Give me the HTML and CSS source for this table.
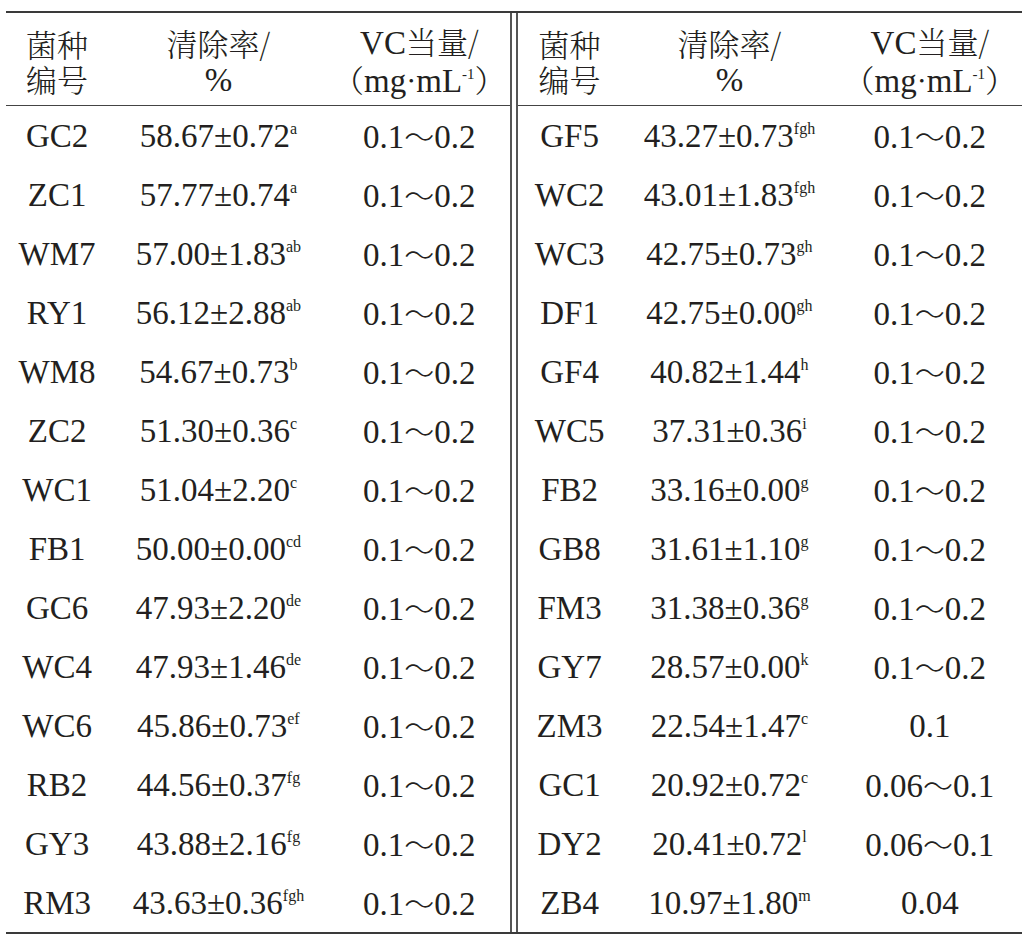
FILE: index.html
```html
<!DOCTYPE html>
<html lang="zh">
<head>
<meta charset="utf-8">
<title>菌种清除率</title>
<link rel="stylesheet" href="styles.css">
</head>
<body>
<div class="frame">
  <table class="half half-left">
    <colgroup><col class="c1"><col class="c2"><col class="c3"></colgroup>
    <thead>
      <tr><th>菌种<br>编号</th><th>清除率/<br><span class="lat">%</span></th><th><span class="lat">VC</span>当量/<br>（<span class="lat">mg</span>·<span class="lat">mL<sup>-1</sup></span>）</th></tr>
    </thead>
    <tbody>
      <tr><td>GC2</td><td>58.67±0.72<sup>a</sup></td><td>0.1<span class="cj">～</span>0.2</td></tr>
      <tr><td>ZC1</td><td>57.77±0.74<sup>a</sup></td><td>0.1<span class="cj">～</span>0.2</td></tr>
      <tr><td>WM7</td><td>57.00±1.83<sup>ab</sup></td><td>0.1<span class="cj">～</span>0.2</td></tr>
      <tr><td>RY1</td><td>56.12±2.88<sup>ab</sup></td><td>0.1<span class="cj">～</span>0.2</td></tr>
      <tr><td>WM8</td><td>54.67±0.73<sup>b</sup></td><td>0.1<span class="cj">～</span>0.2</td></tr>
      <tr><td>ZC2</td><td>51.30±0.36<sup>c</sup></td><td>0.1<span class="cj">～</span>0.2</td></tr>
      <tr><td>WC1</td><td>51.04±2.20<sup>c</sup></td><td>0.1<span class="cj">～</span>0.2</td></tr>
      <tr><td>FB1</td><td>50.00±0.00<sup>cd</sup></td><td>0.1<span class="cj">～</span>0.2</td></tr>
      <tr><td>GC6</td><td>47.93±2.20<sup>de</sup></td><td>0.1<span class="cj">～</span>0.2</td></tr>
      <tr><td>WC4</td><td>47.93±1.46<sup>de</sup></td><td>0.1<span class="cj">～</span>0.2</td></tr>
      <tr><td>WC6</td><td>45.86±0.73<sup>ef</sup></td><td>0.1<span class="cj">～</span>0.2</td></tr>
      <tr><td>RB2</td><td>44.56±0.37<sup>fg</sup></td><td>0.1<span class="cj">～</span>0.2</td></tr>
      <tr><td>GY3</td><td>43.88±2.16<sup>fg</sup></td><td>0.1<span class="cj">～</span>0.2</td></tr>
      <tr><td>RM3</td><td>43.63±0.36<sup>fgh</sup></td><td>0.1<span class="cj">～</span>0.2</td></tr>
    </tbody>
  </table>
  <table class="half half-right">
    <colgroup><col class="r1"><col class="r2"><col class="r3"></colgroup>
    <thead>
      <tr><th>菌种<br>编号</th><th>清除率/<br><span class="lat">%</span></th><th><span class="lat">VC</span>当量/<br>（<span class="lat">mg</span>·<span class="lat">mL<sup>-1</sup></span>）</th></tr>
    </thead>
    <tbody>
      <tr><td>GF5</td><td>43.27±0.73<sup>fgh</sup></td><td>0.1<span class="cj">～</span>0.2</td></tr>
      <tr><td>WC2</td><td>43.01±1.83<sup>fgh</sup></td><td>0.1<span class="cj">～</span>0.2</td></tr>
      <tr><td>WC3</td><td>42.75±0.73<sup>gh</sup></td><td>0.1<span class="cj">～</span>0.2</td></tr>
      <tr><td>DF1</td><td>42.75±0.00<sup>gh</sup></td><td>0.1<span class="cj">～</span>0.2</td></tr>
      <tr><td>GF4</td><td>40.82±1.44<sup>h</sup></td><td>0.1<span class="cj">～</span>0.2</td></tr>
      <tr><td>WC5</td><td>37.31±0.36<sup>i</sup></td><td>0.1<span class="cj">～</span>0.2</td></tr>
      <tr><td>FB2</td><td>33.16±0.00<sup>g</sup></td><td>0.1<span class="cj">～</span>0.2</td></tr>
      <tr><td>GB8</td><td>31.61±1.10<sup>g</sup></td><td>0.1<span class="cj">～</span>0.2</td></tr>
      <tr><td>FM3</td><td>31.38±0.36<sup>g</sup></td><td>0.1<span class="cj">～</span>0.2</td></tr>
      <tr><td>GY7</td><td>28.57±0.00<sup>k</sup></td><td>0.1<span class="cj">～</span>0.2</td></tr>
      <tr><td>ZM3</td><td>22.54±1.47<sup>c</sup></td><td>0.1</td></tr>
      <tr><td>GC1</td><td>20.92±0.72<sup>c</sup></td><td>0.06<span class="cj">～</span>0.1</td></tr>
      <tr><td>DY2</td><td>20.41±0.72<sup>l</sup></td><td>0.06<span class="cj">～</span>0.1</td></tr>
      <tr><td>ZB4</td><td>10.97±1.80<sup>m</sup></td><td>0.04</td></tr>
    </tbody>
  </table>
</div>
</body>
</html>
```

FILE: styles.css
```css
html, body {
  margin: 0;
  padding: 0;
  background: #ffffff;
}

body {
  padding: 11px 6px 0 6px;
  color: #231f20;
  font-family: "Liberation Serif", "Noto Serif CJK SC", "Noto Sans CJK SC", serif;
}

.frame {
  width: 1016px;
  display: flex;
  gap: 4px;
  border-top: 2px solid #3a3a3a;
  border-bottom: 2px solid #3a3a3a;
}

.half {
  width: 506px;
  border-collapse: collapse;
  table-layout: fixed;
  box-sizing: border-box;
}

.half-left {
  border-right: 2px solid #555555;
}

.half-right {
  border-left: 2px solid #555555;
}

.c1 { width: 102px; }
.c2 { width: 220px; }
.c3 { width: 182px; }

.r1 { width: 104px; }
.r2 { width: 216px; }
.r3 { width: 184px; }

th {
  height: 88px;
  padding: 4px 0 0 0;
  font-weight: 300;
  font-family: "Noto Serif CJK SC", "Noto Sans CJK SC", sans-serif;
  font-size: 31px;
  line-height: 35px;
  text-align: center;
  vertical-align: middle;
  border-bottom: 1px solid #444444;
  white-space: nowrap;
}

th .lat {
  font-family: "Liberation Serif", serif;
  font-weight: normal;
  font-size: 33px;
}

td {
  height: 59px;
  padding: 0;
  font-size: 33px;
  line-height: 36px;
  text-align: center;
  vertical-align: middle;
  white-space: nowrap;
}

.cj {
  font-family: "Noto Sans CJK SC", sans-serif;
  font-size: 30px;
  font-weight: 300;
}

sup {
  font-family: "Liberation Serif", serif;
  font-size: 16px;
  line-height: 0;
  vertical-align: 13px;
}

th sup {
  font-size: 15px;
  vertical-align: 13px;
}
```
